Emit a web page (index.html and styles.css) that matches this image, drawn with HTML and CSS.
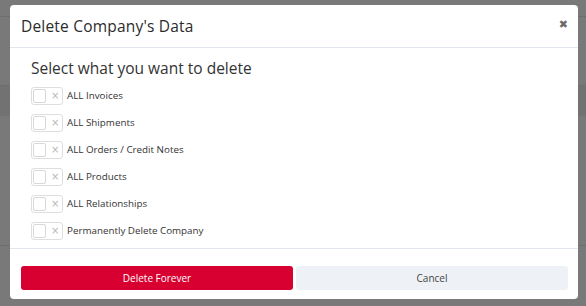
FILE: index.html
```html
<!DOCTYPE html>
<html lang="en">
<head>
    <meta charset="UTF-8">
    <title>Delete Company's Data</title>
    <link rel="stylesheet" href="styles.css">
</head>
<body>
    <div class="backdrop">
        <div class="bg-band band-top"></div>
        <div class="bg-band band-mid"></div>
        <div class="bg-band band-low"></div>
    </div>
    <div class="modal">
        <div class="modal-header">
            <div class="modal-title">Delete Company's Data</div>
            <span class="close">&#10006;</span>
        </div>
        <div class="modal-body">
            <div class="section-title">Select what you want to delete</div>
            <label class="option"><span class="toggle"><span class="knob"></span><span class="x">&#215;</span></span>ALL Invoices</label>
            <label class="option"><span class="toggle"><span class="knob"></span><span class="x">&#215;</span></span>ALL Shipments</label>
            <label class="option"><span class="toggle"><span class="knob"></span><span class="x">&#215;</span></span>ALL Orders / Credit Notes</label>
            <label class="option"><span class="toggle"><span class="knob"></span><span class="x">&#215;</span></span>ALL Products</label>
            <label class="option"><span class="toggle"><span class="knob"></span><span class="x">&#215;</span></span>ALL Relationships</label>
            <label class="option"><span class="toggle"><span class="knob"></span><span class="x">&#215;</span></span>Permanently Delete Company</label>
        </div>
        <div class="modal-footer">
            <button class="btn btn-danger">Delete Forever</button>
            <button class="btn btn-light">Cancel</button>
        </div>
    </div>
</body>
</html>
```

FILE: styles.css
```css
body {
    margin: 0;
    background-color: #797979;
    font-family: 'Open Sans', sans-serif;
    color: #333;
    height: 306px;
    overflow: hidden;
}
.backdrop {
    position: absolute;
    inset: 0;
}
.bg-band {
    position: absolute;
    left: 0;
    right: 0;
    border-top: 1px solid #6e6e6e;
}
.band-top { top: 16px; }
.band-mid { top: 85px; height: 30px; background: #727272; }
.band-low { top: 245px; height: 30px; }
.modal {
    position: relative;
    margin: 5px 8px 0 10px;
    width: 568px;
    height: 294px;
    background: #fff;
    border-radius: 4px;
    display: flex;
    flex-direction: column;
}
.modal-header {
    height: 42px;
    display: flex;
    align-items: center;
    justify-content: space-between;
    padding: 0 10px 0 11px;
    border-bottom: 1px solid #e1e6ec;
}
.modal-title {
    font-size: 15.5px;
    color: #2b2b2b;
    letter-spacing: 0.2px;
}
.close {
    font-size: 11px;
    color: #6a6a6a;
    font-family: 'DejaVu Sans', sans-serif;
    margin-top: -4px;
}
.modal-body {
    padding: 10px 21px 0;
    height: 190px;
    border-bottom: 1px solid #e1e6ec;
}
.section-title {
    font-size: 15.5px;
    color: #333;
    margin-bottom: 4px;
    line-height: 20px;
}
.option {
    display: flex;
    align-items: center;
    height: 27px;
    font-size: 9.8px;
    color: #333;
}
.toggle {
    width: 32px;
    height: 18px;
    border: 1px solid #dedede;
    border-radius: 3px;
    display: flex;
    align-items: center;
    margin-right: 4px;
    box-sizing: border-box;
}
.knob {
    width: 13px;
    height: 14px;
    border: 1px solid #d8d8d8;
    border-radius: 2px;
    margin-left: 1px;
    box-sizing: border-box;
}
.x {
    font-size: 10px;
    color: #b8b8b8;
    margin-left: 5px;
    font-family: 'DejaVu Sans', sans-serif;
}
.modal-footer {
    display: flex;
    gap: 3px;
    padding: 17px 10px 0 11px;
}
.btn {
    flex: 1;
    height: 24px;
    border: none;
    border-radius: 3px;
    font-family: 'Open Sans', sans-serif;
    font-size: 10px;
}
.btn-danger {
    background: #d70030;
    color: #fff;
}
.btn-light {
    background: #eef1f5;
    color: #444;
}
```
